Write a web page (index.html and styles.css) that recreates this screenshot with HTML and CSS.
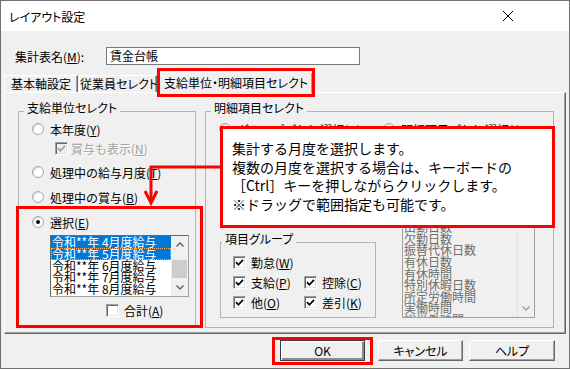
FILE: index.html
```html
<!DOCTYPE html>
<html lang="ja">
<head>
    <meta charset="UTF-8">
    <meta name="viewport" content="width=device-width, initial-scale=1.0">
    <title>レイアウト設定</title>
    <link rel="stylesheet" href="styles.css">
</head>
<body>
    <div class="window">
        <div class="titlebar">
            <span class="title">レイアウト設定</span>
            <svg class="close" viewBox="0 0 10 10"><path d="M0 0L10 10M10 0L0 10" stroke="#000" stroke-width="1"/></svg>
        </div>

        <div class="dialog">
            <div class="name-row">
                <label>集計表名(<u>M</u>):</label>
                <div class="textbox">賃金台帳</div>
            </div>

            <div class="tabs">
                <div class="tab tab-base">基本軸設定</div>
                <div class="tab tab-staff">従業員セレクト</div>
                <div class="tab tab-unit active">支給単位・明細項目セレクト</div>
            </div>

            <div class="panel">
                <!-- left: pay unit -->
                <fieldset class="group unit-group">
                    <legend>支給単位セレクト</legend>
                    <div class="opt row-year"><span class="radio"></span>本年度(<u>Y</u>)</div>
                    <div class="opt row-bonus disabled">
                        <span class="check dim"><svg viewBox="0 0 9 9"><path d="M1 4.2L3.4 6.8L8 1.8" fill="none" stroke="currentColor" stroke-width="1.7"/></svg></span>賞与も表示(<u>N</u>)
                    </div>
                    <div class="opt row-gap"><span class="radio"></span>処理中の給与月度(<u>T</u>)</div>
                    <div class="opt row-gap"><span class="radio"></span>処理中の賞与(<u>B</u>)</div>
                    <div class="opt row-gap"><span class="radio on"></span>選択(<u>E</u>)</div>
                    <div class="listbox month-list">
                        <ul class="items">
                            <li class="sel">令和**年 4月度給与</li>
                            <li class="sel focus">令和**年 5月度給与</li>
                            <li>令和**年 6月度給与</li>
                            <li>令和**年 7月度給与</li>
                            <li>令和**年 8月度給与</li>
                        </ul>
                        <div class="scrollbar">
                            <span class="arrow"><svg viewBox="0 0 8 5"><path d="M0.5 4.5L4 1L7.5 4.5" fill="none" stroke="currentColor" stroke-width="1.4"/></svg></span>
                            <span class="thumb"></span>
                            <span class="arrow"><svg viewBox="0 0 8 5"><path d="M0.5 0.5L4 4L7.5 0.5" fill="none" stroke="currentColor" stroke-width="1.4"/></svg></span>
                        </div>
                    </div>
                    <div class="opt row-total"><span class="check"></span>合計(<u>A</u>)</div>
                </fieldset>

                <!-- right: detail items -->
                <fieldset class="group detail-group">
                    <legend>明細項目セレクト</legend>
                    <div class="opt radio-pair">
                        <span class="pair-item"><span class="radio"></span>グループごとに選択(<u>G</u>)</span>
                        <span class="pair-item"><span class="radio"></span>明細項目ごとに選択(<u>I</u>)</span>
                    </div>
                    <div class="detail-body">
                        <div class="group-col">
                            <fieldset class="group sub-group">
                                <legend>項目グループ</legend>
                                <div class="opt check-row first">
                                    <span class="cell"><span class="check"><svg viewBox="0 0 9 9"><path d="M1 4.2L3.4 6.8L8 1.8" fill="none" stroke="currentColor" stroke-width="1.7"/></svg></span>勤怠(<u>W</u>)</span>
                                </div>
                                <div class="opt check-row">
                                    <span class="cell"><span class="check"><svg viewBox="0 0 9 9"><path d="M1 4.2L3.4 6.8L8 1.8" fill="none" stroke="currentColor" stroke-width="1.7"/></svg></span>支給(<u>P</u>)</span>
                                    <span class="cell"><span class="check"><svg viewBox="0 0 9 9"><path d="M1 4.2L3.4 6.8L8 1.8" fill="none" stroke="currentColor" stroke-width="1.7"/></svg></span>控除(<u>C</u>)</span>
                                </div>
                                <div class="opt check-row">
                                    <span class="cell"><span class="check"><svg viewBox="0 0 9 9"><path d="M1 4.2L3.4 6.8L8 1.8" fill="none" stroke="currentColor" stroke-width="1.7"/></svg></span>他(<u>O</u>)</span>
                                    <span class="cell"><span class="check"><svg viewBox="0 0 9 9"><path d="M1 4.2L3.4 6.8L8 1.8" fill="none" stroke="currentColor" stroke-width="1.7"/></svg></span>差引(<u>K</u>)</span>
                                </div>
                            </fieldset>
                        </div>
                        <div class="listbox item-list">
                            <ul class="items">
                                <li>要出勤日数</li>
                                <li>出勤日数</li>
                                <li>休日出勤日数</li>
                                <li>特別休日数</li>
                                <li>遅刻回数</li>
                                <li>早退回数</li>
                                <li>有休消化日数</li>
                                <li>出勤日数</li>
                                <li>欠勤日数</li>
                                <li>振替代休日数</li>
                                <li>有休日数</li>
                                <li>有休時間</li>
                                <li>特別休暇日数</li>
                                <li>所定労働時間</li>
                                <li>実働時間</li>
                                <li>総労働時間</li>
                            </ul>
                            <div class="scrollbar">
                                <span class="arrow"><svg viewBox="0 0 8 5"><path d="M0.5 4.5L4 1L7.5 4.5" fill="none" stroke="currentColor" stroke-width="1.4"/></svg></span>
                                <span class="arrow"><svg viewBox="0 0 8 5"><path d="M0.5 0.5L4 4L7.5 0.5" fill="none" stroke="currentColor" stroke-width="1.4"/></svg></span>
                            </div>
                        </div>
                    </div>
                </fieldset>
            </div>

            <div class="buttons">
                <div class="btn default">OK</div>
                <div class="btn">キャンセル</div>
                <div class="btn help">ヘルプ</div>
            </div>
        </div>

        <!-- annotation overlay -->
        <svg class="connector" viewBox="0 0 568 367">
            <polyline points="219,166 150,166 150,199" fill="none" stroke="#ff0000" stroke-width="3"/>
            <polyline points="144,190 150,202 156,190" fill="none" stroke="#ff0000" stroke-width="3"/>
        </svg>
        <div class="mark mark-tab"></div>
        <div class="mark mark-select"></div>
        <div class="mark mark-ok"></div>
        <div class="callout">
            <p>集計する月度を選択します。</p>
            <p>複数の月度を選択する場合は、キーボードの</p>
            <p>［Ctrl］キーを押しながらクリックします。</p>
            <p>※ドラッグで範囲指定も可能です。</p>
        </div>
    </div>
</body>
</html>
```

FILE: styles.css
```css
* {
    box-sizing: border-box;
}

body {
    margin: 0;
    font-family: "Noto Sans CJK JP", "Noto Sans", sans-serif;
    font-size: 12px;
    color: #000;
    background: #fff;
}

u {
    text-decoration-thickness: 1px;
    text-underline-offset: 1px;
}

.window {
    position: relative;
    width: 570px;
    height: 369px;
    border: 1px solid #707070;
    background: #f0f0f0;
    overflow: hidden;
}

/* title bar */
.titlebar {
    display: flex;
    align-items: center;
    height: 30px;
    padding: 0 56px 0 8px;
    background: #fff;
}

.titlebar .title {
    flex: 1;
    font-feature-settings: "palt";
}

.titlebar .close {
    width: 10px;
    height: 10px;
}

.dialog {
    padding: 16px 3px 0 3px;
}

/* name row */
.name-row {
    display: flex;
    align-items: center;
    height: 18px;
    padding-left: 11px;
}

.name-row label {
    width: 91px;
    font-feature-settings: "palt";
}

.textbox {
    width: 254px;
    height: 18px;
    padding-left: 3px;
    line-height: 16px;
    background: #fff;
    border: 1px solid #7a7a7a;
}

/* tabs */
.tabs {
    position: relative;
    z-index: 1;
    display: flex;
    align-items: flex-end;
    height: 20px;
    margin-top: 7px;
}

.tab {
    height: 17px;
    line-height: 15px;
    text-align: center;
    white-space: nowrap;
    overflow: hidden;
    border: 1px solid #fff;
    border-bottom: none;
    border-right-color: #696969;
    box-shadow: inset -1px 0 #a0a0a0;
    font-feature-settings: "palt";
}

.tab-base {
    width: 74px;
}

.tab-staff {
    width: 78px;
    margin-left: 1px;
}

.tab-unit {
    width: 154px;
    margin-left: 2px;
}

.tab.active {
    height: 21px;
    margin-bottom: -1px;
    line-height: 19px;
    background: #f0f0f0;
}

/* tab page */
.panel {
    display: flex;
    align-items: flex-start;
    height: 242px;
    padding: 8px 0 0 13px;
    border: 1px solid;
    border-color: #fff #696969 #696969 #fff;
    box-shadow: inset -1px -1px #a0a0a0;
}

.group {
    margin: 0;
    padding: 0;
    min-inline-size: 0;
    border: 1px solid #b4b4b4;
}

.group legend {
    margin-left: 5px;
    padding: 0 3px 6px;
    line-height: 14px;
    font-feature-settings: "palt";
}

.opt {
    display: flex;
    align-items: center;
    height: 16px;
    white-space: nowrap;
}

.radio {
    position: relative;
    flex: none;
    width: 12px;
    height: 12px;
    margin-right: 6px;
    border-radius: 50%;
    background: #fff;
    border: 1px solid #a6a6a6;
    box-shadow: inset 1px 1px 0 #dadada;
}

.radio.on::after {
    content: "";
    position: absolute;
    left: 3px;
    top: 3px;
    width: 4px;
    height: 4px;
    border-radius: 50%;
    background: #000;
}

.check {
    display: flex;
    align-items: center;
    justify-content: center;
    flex: none;
    width: 13px;
    height: 13px;
    margin-right: 5px;
    color: #000;
    background: #fff;
    border: 1px solid;
    border-color: #a0a0a0 #fff #fff #a0a0a0;
    box-shadow: inset 1px 1px #696969, inset -1px -1px #e3e3e3;
}

.check svg {
    width: 9px;
    height: 9px;
}

.check.dim {
    color: #a0a0a0;
    background: #f0f0f0;
}

.disabled {
    color: #a0a0a0;
    text-shadow: 1px 1px 0 #fff;
}

/* left group */
.unit-group {
    width: 178px;
    height: 227px;
}

.unit-group > .opt {
    margin-left: 13px;
}

.unit-group > .row-bonus {
    margin: 3px 0 0 36px;
}

.unit-group > .row-bonus .check {
    margin-right: 3px;
}

.unit-group > .row-gap {
    margin-top: 8px;
}

.unit-group > .row-gap + .row-gap {
    margin-top: 9px;
}

.unit-group > .row-total {
    margin: 5px 0 0 87px;
}

/* list boxes */
.listbox {
    display: flex;
    border: 1px solid #a0a0a0;
    border-top-color: #696969;
    border-left-color: #696969;
    background: #fff;
    overflow: hidden;
}

.listbox .items {
    flex: 1;
    margin: 0;
    padding: 0;
    list-style: none;
    overflow: hidden;
    white-space: nowrap;
}

.listbox .scrollbar {
    display: flex;
    flex-direction: column;
    justify-content: space-between;
    width: 17px;
    background: #f0f0f0;
}

.scrollbar .arrow {
    display: flex;
    align-items: center;
    justify-content: center;
    height: 17px;
    color: #606060;
}

.scrollbar .arrow svg {
    width: 8px;
    height: 5px;
}

.month-list {
    width: 139px;
    height: 62px;
    margin: 5px 0 0 31px;
}

.month-list .items li {
    height: 11.8px;
    line-height: 11.8px;
    padding-left: 1px;
}

.month-list .items li.sel {
    color: #fff;
    background: #0078d7;
}

.month-list .items li.focus {
    outline: 1px dotted #ffb060;
    outline-offset: -1px;
}

.month-list .scrollbar {
    justify-content: flex-start;
}

.month-list .thumb {
    height: 18px;
    margin: 7px 1px 1px;
    background: #cdcdcd;
}

/* right group */
.detail-group {
    width: 349px;
    height: 227px;
    margin-left: 9px;
}

.radio-pair {
    margin-left: 13px;
}

.radio-pair .pair-item {
    display: flex;
    align-items: center;
    width: 164px;
}

.detail-body {
    display: flex;
    height: 181px;
    margin-left: 14px;
}

.group-col {
    display: flex;
    flex-direction: column;
    justify-content: flex-end;
    width: 156px;
}

.sub-group {
    width: 156px;
    height: 86px;
}

.sub-group legend {
    margin-left: 1px;
}

.check-row {
    margin: 4px 0 0 12px;
}

.check-row.first {
    margin-top: 2px;
}

.check-row .cell {
    display: flex;
    align-items: center;
    width: 72px;
}

.item-list {
    width: 133px;
    height: 179px;
    margin: 2px 0 0 26px;
    background: #f0f0f0;
    border-color: #a0a0a0;
}

.item-list .items li {
    height: 11.6px;
    line-height: 11.6px;
    padding-left: 1px;
    color: #6d6d6d;
}

.item-list .scrollbar {
    border-left: 1px solid #e3e3e3;
}

.item-list .arrow {
    color: #a0a0a0;
}

/* buttons */
.buttons {
    display: flex;
    justify-content: flex-end;
    margin-top: 6px;
    padding-right: 11px;
}

.btn {
    width: 85px;
    height: 21px;
    margin-left: 13px;
    line-height: 19px;
    text-align: center;
    background: #f0f0f0;
    border: 1px solid;
    border-color: #fff #696969 #696969 #fff;
    box-shadow: inset -1px -1px #a0a0a0;
    font-feature-settings: "palt";
}

.btn.default {
    border-color: #3c3c3c;
    box-shadow: inset 1px 1px #fff, inset -2px -2px #8a8a8a;
}

.btn.help {
    width: 86px;
    margin-left: 6px;
}

/* annotations */
.connector {
    position: absolute;
    left: 0;
    top: 0;
    width: 568px;
    height: 367px;
    z-index: 4;
}

.mark {
    position: absolute;
    z-index: 5;
    border: 3px solid #ff0000;
}

.mark-tab {
    left: 156px;
    top: 67px;
    width: 158px;
    height: 29px;
}

.mark-select {
    left: 15px;
    top: 205px;
    width: 187px;
    height: 122px;
}

.mark-ok {
    left: 271px;
    top: 336px;
    width: 101px;
    height: 28px;
}

.callout {
    position: absolute;
    z-index: 6;
    left: 219px;
    top: 125px;
    width: 335px;
    height: 102px;
    padding: 10px 9px 0;
    font-size: 14px;
    line-height: 18.7px;
    background: #fff;
    border: 3px solid #ff0000;
}

.callout p {
    margin: 0;
    white-space: nowrap;
}
```
